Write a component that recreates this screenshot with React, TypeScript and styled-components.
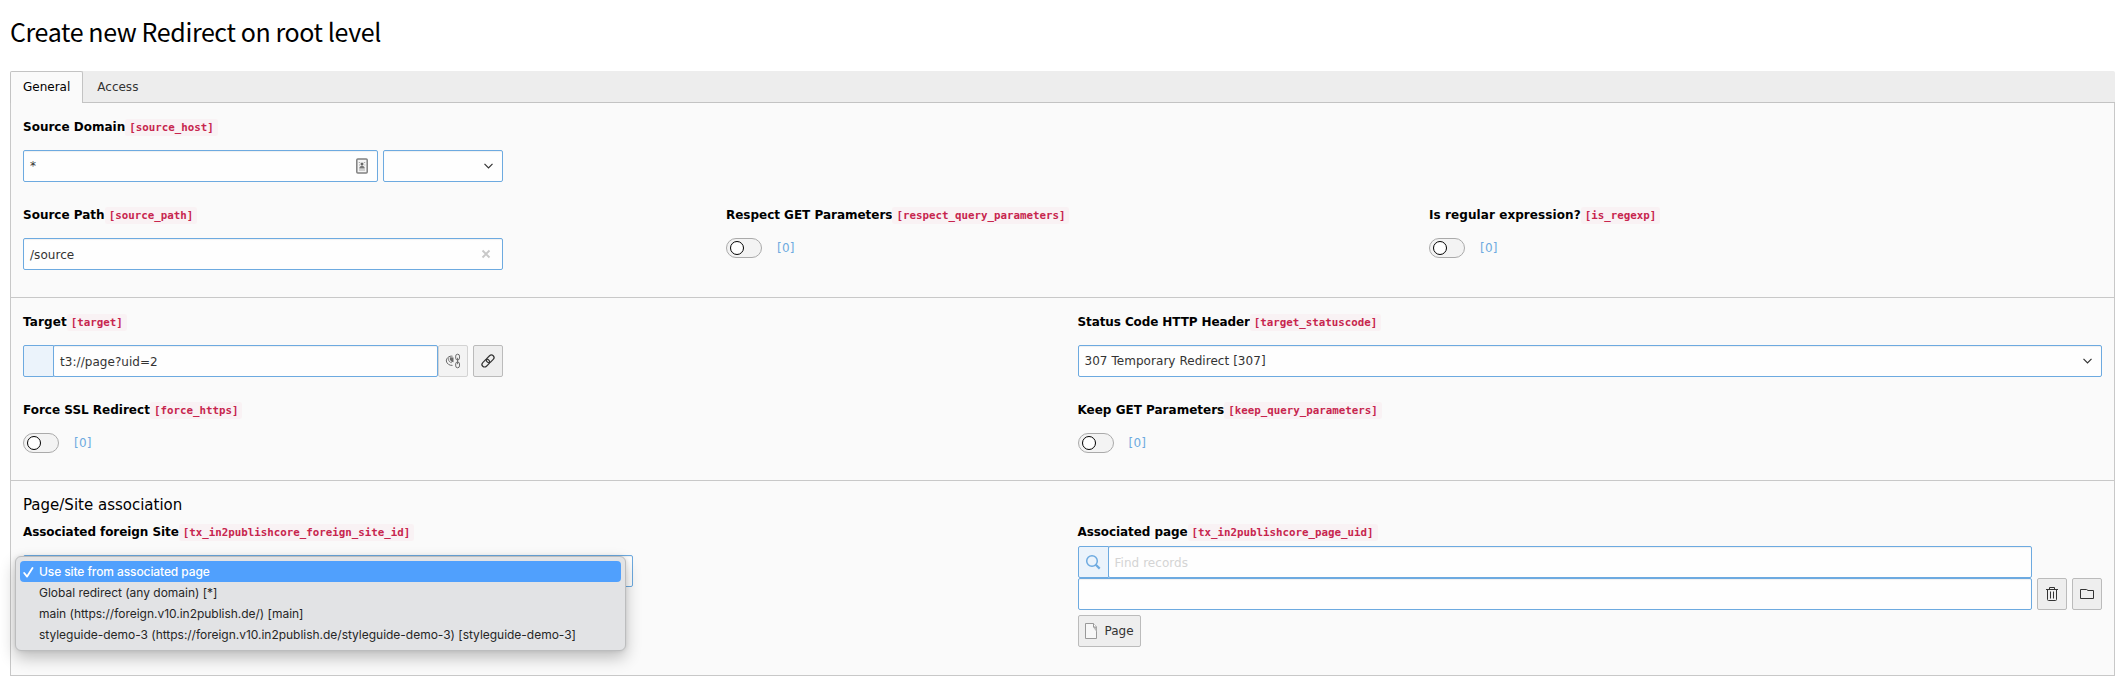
import React from "react";
import styled, { createGlobalStyle } from "styled-components";

const GlobalStyle = createGlobalStyle`
  *, *::before, *::after { box-sizing: border-box; }
  body {
    margin: 0;
    background: #fff;
    color: #000;
    font: 12px/18px "DejaVu Sans", Verdana, sans-serif;
  }
`;

const Page = styled.main`
  width: 2125px;
  height: 683px;
  padding: 13px 10px 0;
  overflow: hidden;
`;

const Title = styled.h1`
  margin: 0 0 22px;
  height: 36px;
  font: 400 25px/36px "Noto Sans CJK SC", "Source Sans Pro", sans-serif;
  letter-spacing: -0.39px;
  white-space: nowrap;
`;

const TabBar = styled.div`
  display: flex;
  height: 32px;
  border-bottom: 1px solid #c3c3c3;
  border-radius: 2px 2px 0 0;
  background: #ededed;
`;

const Tab = styled.div<{ $active?: boolean }>`
  height: ${(p) => (p.$active ? 32 : 31)}px;
  padding: ${(p) => (p.$active ? "6px 12px" : "7px 14px")};
  border: ${(p) => (p.$active ? "1px solid #c3c3c3" : "0")};
  border-bottom: 0;
  border-radius: 2px 2px 0 0;
  background: ${(p) => (p.$active ? "#fafafa" : "transparent")};
  color: ${(p) => (p.$active ? "#000" : "#333")};
`;

const Panel = styled.div`
  border: 1px solid #c8c8c8;
  border-top: 0;
  background: #fafafa;
`;

const Section = styled.section<{ $height: number }>`
  display: flex;
  flex-direction: column;
  height: ${(p) => p.$height}px;
  padding: 16px 12px 0;
  & + & { border-top: 1px solid #c8c8c8; }
`;

const Row = styled.div<{ $cols: number; $height?: number }>`
  display: grid;
  grid-template-columns: repeat(${(p) => p.$cols}, minmax(0, 1fr));
  column-gap: 30px;
  height: ${(p) => (p.$height ? p.$height + "px" : "auto")};
`;

const Field = styled.div<{ $tight?: boolean }>`
  display: flex;
  flex-direction: column;
  align-items: flex-start;
  gap: ${(p) => (p.$tight ? 5 : 14)}px;
`;

const Label = styled.div<{ $tracking: number }>`
  display: flex;
  height: 17px;
  line-height: 17px;
  font-weight: 700;
  letter-spacing: ${(p) => p.$tracking}px;
  white-space: nowrap;
`;

const Code = styled.code`
  padding: 0 4px;
  border-radius: 2px;
  background: #f9f2f4;
  color: #c7254e;
  font: 700 10.8px/17px "DejaVu Sans Mono", monospace;
  letter-spacing: 0;
`;

const Heading = styled.h2`
  margin: -2px 0 2px;
  height: 27px;
  font: 400 15px/20px "DejaVu Sans", sans-serif;
`;

const Line = styled.div<{ $width?: number }>`
  display: flex;
  gap: 5px;
  width: ${(p) => (p.$width ? p.$width + "px" : "100%")};
`;

const Input = styled.div<{ $width?: number }>`
  display: flex;
  align-items: center;
  justify-content: space-between;
  flex: ${(p) => (p.$width ? "none" : 1)};
  width: ${(p) => (p.$width ? p.$width + "px" : "auto")};
  height: 32px;
  padding: 0 9px 0 6px;
  border: 1px solid #6daae0;
  border-radius: 2px;
  background: #fefefe;
  box-shadow: inset 0 1px 1px rgba(0, 0, 0, 0.06);
  color: #333;
  letter-spacing: 0.05px;
`;

const LoweredText = styled.span`
  padding-top: 2px;
`;

const Addon = styled.div`
  display: flex;
  align-items: center;
  justify-content: center;
  width: 31px;
  height: 32px;
  margin-right: -1px;
  border: 1px solid #6daae0;
  border-radius: 2px 0 0 2px;
  background: #ebf3fb;
`;

const Placeholder = styled(LoweredText)`
  color: #d4d4d4;
`;

const Button = styled.div<{ $width?: number; $disabled?: boolean }>`
  display: flex;
  flex: none;
  align-items: center;
  justify-content: center;
  gap: 6px;
  width: ${(p) => p.$width ?? 30}px;
  height: 32px;
  border: 1px solid ${(p) => (p.$disabled ? "#d3d3d3" : "#bbb")};
  border-radius: 2px;
  background: ${(p) => (p.$disabled ? "#f3f3f3" : "#eee")};
  color: #333;
`;

const Group = styled.div`
  display: flex;
  flex: 1;
`;

const ToggleRow = styled.div`
  display: flex;
  align-items: center;
  gap: 15px;
  height: 20px;
  color: #6daae0;
  letter-spacing: 0.2px;
`;

const Track = styled.span`
  display: flex;
  align-items: center;
  width: 36px;
  height: 20px;
  padding-left: 3px;
  border: 1px solid #aaa;
  border-radius: 10px;
  background: #f3f3f3;
`;

const Knob = styled.span`
  width: 14px;
  height: 14px;
  border: 1px solid #000;
  border-radius: 50%;
  background: #fff;
`;

const SelectAnchor = styled.div`
  position: relative;
  width: 610px;
`;

const Menu = styled.div`
  position: absolute;
  top: 1px;
  left: -8px;
  width: 611px;
  height: 95px;
  padding: 4px;
  border: 1px solid #bcbdbe;
  border-radius: 6px;
  background: #e2e3e5;
  box-shadow: 0 7px 16px rgba(0, 0, 0, 0.24), 0 0 4px rgba(0, 0, 0, 0.1);
`;

const Option = styled.div<{ $selected?: boolean }>`
  display: flex;
  align-items: center;
  height: 21px;
  padding-left: 3px;
  border-radius: 4px;
  background: ${(p) => (p.$selected ? "#50a0fd" : "transparent")};
  color: ${(p) => (p.$selected ? "#fff" : "#262626")};
  font: ${(p) => (p.$selected ? 500 : 400)} 12px/21px Inter, sans-serif;
  letter-spacing: ${(p) => (p.$selected ? -0.1 : -0.02)}px;
  white-space: nowrap;
`;

const CheckSlot = styled.span`
  display: flex;
  width: 16px;
`;

const ClearSlot = styled.span`
  display: flex;
  padding-right: 2px;
`;

const Stack = styled.div`
  display: flex;
  flex-direction: column;
  width: 100%;
`;

const Chevron = () => (
  <svg width="9" height="6" viewBox="0 0 9 6" fill="none" stroke="#333" strokeWidth="1.2">
    <path d="M.5 .8l4 4 4-4" />
  </svg>
);

const ContactIcon = () => (
  <svg width="12" height="16" viewBox="0 0 12 16">
    <rect x=".8" y="1" width="10.4" height="14" rx="1" fill="#f4f4f4" stroke="#808080" strokeWidth="1.500" />
    <circle cx="6" cy="6" r="1.500" fill="#666" />
    <path d="M3.200 10.600c.2-2 1.300-2.800 2.800-2.800s2.600.8 2.800 2.800z" fill="#777" />
    <path d="M2.800 4.500h1.400M7.800 4.500h1.400M3 7h1M8.500 7h.8M3 12h6" stroke="#999" strokeWidth=".8" />
  </svg>
);

const ClearIcon = () => (
  <svg width="10" height="10" viewBox="0 0 10 10" stroke="#c8c8c8" strokeWidth="1.900">
    <path d="M1.500 1.500l7 7M8.500 1.500l-7 7" />
  </svg>
);

const LinkExplainIcon = () => (
  <svg width="16" height="16" viewBox="0 0 16 16" fill="none" stroke="#6a6a6a" strokeWidth="1">
    <path d="M7.500 3.200C4 2.600 1.300 5.200 1.300 8c.6 2.900 3.200 4.600 6.200 4.400" />
    <path d="M3.400 5.200c-.3 2.300.9 4.200 3.400 4.500" strokeWidth=".8" />
    <path d="M4.800 4.200l3.700.2v4.800L6.600 8.800 4.900 6.800z" fill="#6a6a6a" stroke="none" />
    <rect x="10.700" y="1.200" width="3.800" height="5.800" rx="1.900" />
    <rect x="10.700" y="9" width="3.800" height="5.800" rx="1.900" />
    <path d="M12.600 4.800v6.400" />
  </svg>
);

const LinkIcon = () => (
  <svg width="16" height="16" viewBox="0 0 16 16" fill="none" stroke="#333" strokeWidth="1.200">
    <g transform="rotate(-45 8 8)">
      <rect x=".6" y="5.400" width="8.600" height="5.200" rx="2.600" />
      <rect x="6.800" y="5.400" width="8.600" height="5.200" rx="2.600" />
    </g>
  </svg>
);

const SearchIcon = () => (
  <svg width="16" height="16" viewBox="0 0 16 16" fill="none" stroke="#6daae0">
    <circle cx="7" cy="7" r="5.300" strokeWidth="1.500" />
    <path d="M10.800 10.800l3.900 3.800" strokeWidth="2.200" />
  </svg>
);

const TrashIcon = () => (
  <svg width="16" height="16" viewBox="0 0 16 16" fill="none" stroke="#333">
    <path d="M2 3.500h12M5.500 3V1.500h5V3M3.500 4v9.500q0 1 1 1h7q1 0 1-1V4M6.500 5.500v7M9.500 5.500v7" />
  </svg>
);

const FolderIcon = () => (
  <svg width="16" height="16" viewBox="0 0 16 16" fill="none" stroke="#333">
    <path d="M1.500 3.500h6l1.500 1h5.500v8h-13z" />
  </svg>
);

const PageIcon = () => (
  <svg width="14" height="18" viewBox="0 0 14 18" fill="none">
    <path d="M1.500 1.500h8l3 3.500v11.500h-11z" fill="#f7f7f7" stroke="#999" />
    <path d="M9 5h3.500v5z" fill="#bbb" />
    <path d="M9.500 1.500V5h3" fill="#fff" stroke="#999" />
  </svg>
);

const CheckIcon = () => (
  <svg
    width="11"
    height="12"
    viewBox="0 0 11 12"
    fill="none"
    stroke="#fff"
    strokeWidth="1.800"
    strokeLinecap="round"
    strokeLinejoin="round"
  >
    <path d="M1.200 7l2.900 3.600L9.500 2" />
  </svg>
);

const FieldLabel = ({ text, name, tracking = 0 }: { text: string; name: string; tracking?: number }) => (
  <Label $tracking={tracking}>
    <span>{text}</span>
    <Code>[{name}]</Code>
  </Label>
);

const Toggle = () => (
  <ToggleRow>
    <Track>
      <Knob />
    </Track>
    <span>[0]</span>
  </ToggleRow>
);

const OPTIONS = [
  "Use site from associated page",
  "Global redirect (any domain) [*]",
  "main (https://foreign.v10.in2publish.de/) [main]",
  "styleguide-demo-3 (https://foreign.v10.in2publish.de/styleguide-demo-3) [styleguide-demo-3]",
];

export default function App() {
  return (
    <Page>
      <GlobalStyle />
      <Title>Create new Redirect on root level</Title>
      <TabBar>
        <Tab $active>General</Tab>
        <Tab>Access</Tab>
      </TabBar>
      <Panel>
        <Section $height={194}>
          <Row $cols={3} $height={88}>
            <Field>
              <FieldLabel text="Source Domain" name="source_host" />
              <Line $width={480}>
                <Input>
                  <span>*</span>
                  <ContactIcon />
                </Input>
                <Input $width={120}>
                  <span />
                  <Chevron />
                </Input>
              </Line>
            </Field>
          </Row>
          <Row $cols={3}>
            <Field>
              <FieldLabel text="Source Path" name="source_path" />
              <Line $width={480}>
                <Input>
                  <LoweredText>/source</LoweredText>
                  <ClearSlot>
                    <ClearIcon />
                  </ClearSlot>
                </Input>
              </Line>
            </Field>
            <Field>
              <FieldLabel text="Respect GET Parameters" name="respect_query_parameters" tracking={-0.02} />
              <Toggle />
            </Field>
            <Field>
              <FieldLabel text="Is regular expression?" name="is_regexp" tracking={0.08} />
              <Toggle />
            </Field>
          </Row>
        </Section>
        <Section $height={183}>
          <Row $cols={2} $height={88}>
            <Field>
              <FieldLabel text="Target" name="target" tracking={0.1} />
              <Line $width={480}>
                <Group>
                  <Addon />
                  <Input>
                    <LoweredText>t3://page?uid=2</LoweredText>
                  </Input>
                  <Button $disabled>
                    <LinkExplainIcon />
                  </Button>
                </Group>
                <Button>
                  <LinkIcon />
                </Button>
              </Line>
            </Field>
            <Field>
              <FieldLabel text="Status Code HTTP Header" name="target_statuscode" tracking={-0.1} />
              <Line>
                <Input>
                  <span>307 Temporary Redirect [307]</span>
                  <Chevron />
                </Input>
              </Line>
            </Field>
          </Row>
          <Row $cols={2}>
            <Field>
              <FieldLabel text="Force SSL Redirect" name="force_https" />
              <Toggle />
            </Field>
            <Field>
              <FieldLabel text="Keep GET Parameters" name="keep_query_parameters" />
              <Toggle />
            </Field>
          </Row>
        </Section>
        <Section $height={195}>
          <Heading>Page/Site association</Heading>
          <Row $cols={2}>
            <Field>
              <FieldLabel
                text="Associated foreign Site"
                name="tx_in2publishcore_foreign_site_id"
                tracking={-0.07}
              />
              <SelectAnchor>
                <Input />
                <Menu>
                  {OPTIONS.map((label, i) => (
                    <Option key={label} $selected={i === 0}>
                      <CheckSlot>{i === 0 && <CheckIcon />}</CheckSlot>
                      {label}
                    </Option>
                  ))}
                </Menu>
              </SelectAnchor>
            </Field>
            <Field $tight>
              <FieldLabel text="Associated page" name="tx_in2publishcore_page_uid" tracking={-0.08} />
              <Stack>
                <Line $width={954}>
                  <Group>
                    <Addon>
                      <SearchIcon />
                    </Addon>
                    <Input>
                      <Placeholder>Find records</Placeholder>
                    </Input>
                  </Group>
                </Line>
                <Line>
                  <Input />
                  <Button>
                    <TrashIcon />
                  </Button>
                  <Button>
                    <FolderIcon />
                  </Button>
                </Line>
              </Stack>
              <Button $width={63}>
                <PageIcon />
                Page
              </Button>
            </Field>
          </Row>
        </Section>
      </Panel>
    </Page>
  );
}
